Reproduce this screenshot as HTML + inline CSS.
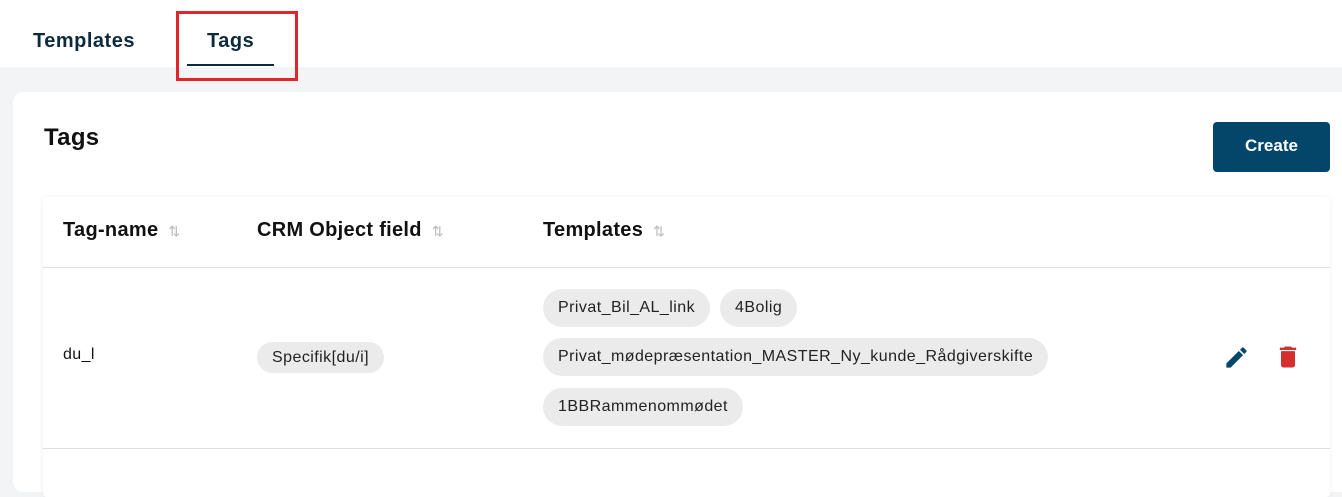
<!DOCTYPE html>
<html><head><style>
*{margin:0;padding:0;box-sizing:border-box}
body{width:1342px;height:460px;overflow:hidden;background:#f3f4f6;font-family:"Liberation Sans",sans-serif;color:#111;position:relative}
.top{position:absolute;left:0;top:0;width:1342px;height:67px;background:#fff}
.tab{position:absolute;top:30px;font-size:20px;font-weight:bold;color:#0d2b3e;letter-spacing:0.5px}
.ul{position:absolute;left:187px;top:64px;width:87px;height:2px;background:#0d2b3e}
.red{position:absolute;left:176px;top:11px;width:122px;height:70px;border:3px solid #e0252b}
.card{position:absolute;left:13px;top:92px;width:1340px;height:400px;background:#fff;border-radius:10px}
h1{position:absolute;left:44px;top:124px;font-size:24px;font-weight:bold;letter-spacing:0.3px}
.btn{position:absolute;left:1213px;top:122px;width:117px;height:50px;background:#03466a;border-radius:4px;color:#fff;font-weight:bold;font-size:17px;text-align:center;line-height:48px}
.tbl{position:absolute;left:43px;top:197px;width:1287px;height:300px;background:#fff;box-shadow:0 0 6px rgba(0,0,0,.06);border-radius:4px}
.th{position:absolute;top:219px;font-size:20px;font-weight:bold;letter-spacing:0.3px}
.s{color:#bbb;font-size:14px;font-weight:normal;margin-left:10px}
.line{position:absolute;left:43px;width:1287px;height:1px;background:#ddd}
.chip{position:absolute;height:38px;line-height:38px;background:#ebebeb;border-radius:19px;font-size:16px;letter-spacing:0.45px;padding:0 15px;color:#222}
</style></head><body>
<div class="top"></div>
<div class="tab" style="left:33px">Templates</div>
<div class="tab" style="left:207px">Tags</div>
<div class="ul"></div>
<div class="red"></div>
<div class="card"></div>
<h1>Tags</h1>
<div class="btn">Create</div>
<div class="tbl"></div>
<div class="th" style="left:63px">Tag-name<span class="s">⇅</span></div>
<div class="th" style="left:257px">CRM Object field<span class="s">⇅</span></div>
<div class="th" style="left:543px">Templates<span class="s">⇅</span></div>
<div class="line" style="top:267px"></div>
<div class="line" style="top:448px"></div>
<div style="position:absolute;left:63px;top:346px;font-size:16px;letter-spacing:0.4px">du_l</div>
<div class="chip" style="left:257px;top:342px;height:31px;line-height:31px">Specifik[du/i]</div>
<div class="chip" style="left:543px;top:289px">Privat_Bil_AL_link</div>
<div class="chip" style="left:720px;top:289px">4Bolig</div>
<div class="chip" style="left:543px;top:338px">Privat_mødepræsentation_MASTER_Ny_kunde_Rådgiverskifte</div>
<div class="chip" style="left:543px;top:388px">1BBRammenommødet</div>
<svg style="position:absolute;left:1223px;top:344px" width="27" height="27" viewBox="0 0 24 24"><path fill="#03466a" d="M3 17.25V21h3.75L17.81 9.94l-3.75-3.75L3 17.25zM20.71 7.04a1 1 0 000-1.41l-2.34-2.34a1 1 0 00-1.41 0l-1.83 1.83 3.75 3.75 1.83-1.83z"/></svg>
<svg style="position:absolute;left:1274px;top:343px" width="28" height="28" viewBox="0 0 24 24"><path fill="#d32f2f" d="M6 19c0 1.1.9 2 2 2h8c1.1 0 2-.9 2-2V7H6v12zM19 4h-3.5l-1-1h-5l-1 1H5v2h14V4z"/></svg>
</body></html>
